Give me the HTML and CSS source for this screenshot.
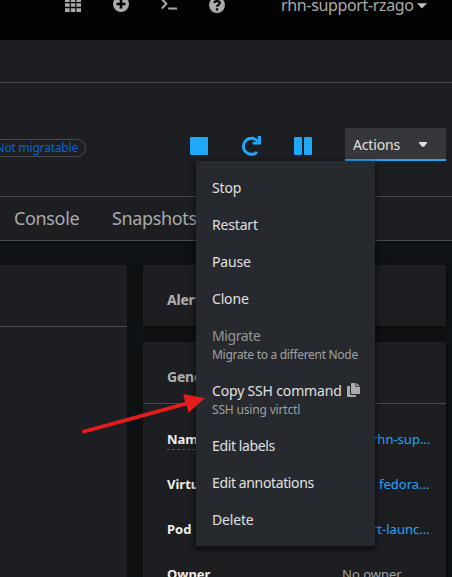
FILE: index.html
```html
<!DOCTYPE html>
<html lang="en">
<head>
<meta charset="utf-8">
<title>Virtual machine</title>
<link rel="stylesheet" href="styles.css">
</head>
<body>
<header class="masthead">
  <svg class="tool" width="16" height="12" viewBox="0 0 16 12"><path d="M0 0h4.6v2H0zM5.8 0h4.4v2H5.8zM11.4 0H16v2h-4.6zM0 3.2h4.6v3.6H0zM5.8 3.2h4.4v3.6H5.8zM11.4 3.2H16v3.6h-4.6zM0 8.2h4.6V12H0zM5.8 8.2h4.4V12H5.8zM11.4 8.2H16V12h-4.6z"/></svg>
  <svg class="tool" width="16" height="18" viewBox="0 0 16 18"><circle cx="8" cy="8" r="8"/><path class="cut" d="M8 3.5v9M3.5 8h9"/></svg>
  <svg class="tool" width="16" height="18" viewBox="0 0 16 18"><path class="prompt" d="M.8 3 5.3 7.8.8 12.6M7.2 12.6H16"/></svg>
  <svg class="tool" width="16" height="18" viewBox="0 0 16 18"><circle cx="8" cy="9" r="8"/><path class="cut question" d="M5.2 6.9C5.8 4.3 11 4.6 10.8 7.2 10.6 9 8 8.8 8 10.8M8 12.2v2.2"/></svg>
  <span class="user">rhn-support-rzago</span>
  <svg class="user-caret" width="10" height="6" viewBox="0 0 10 6"><path d="M0 .2h10L5 5.5z"/></svg>
</header>
<div class="breadcrumb"></div>
<section class="title-row">
  <span class="label">Not migratable</span>
  <div class="controls">
    <svg width="18" height="18" viewBox="0 0 18 18"><rect width="18" height="18" rx="1.2"/></svg>
    <svg width="20" height="20" viewBox="0 0 20 20"><path class="ring" d="M16.5 5.2A8 8 0 1 0 16 16"/><path d="M20 0v8.4h-8.4V5.7h5.1V0z"/></svg>
    <svg width="18" height="18" viewBox="0 0 18 18"><rect width="8" height="18" rx="1.2"/><rect x="10" width="8" height="18" rx="1.2"/></svg>
  </div>
  <div class="dropdown">
    <button class="actions"><span>Actions</span><svg width="8" height="5" viewBox="0 0 8 5"><path d="M0 0h8v1L5 4.7H3L0 1z"/></svg></button>
    <ul class="menu">
      <li>Stop</li>
      <li>Restart</li>
      <li>Pause</li>
      <li>Clone</li>
      <li class="disabled">Migrate<small class="migrate-note">Migrate to a different Node</small></li>
      <li><span class="copy">Copy SSH command</span><svg class="copy-icon" width="13" height="14" viewBox="0 0 13 14"><path d="M3 3H1Q0 3 0 4v9q0 1 1 1h7q1 0 1-1v-1H4q-1 0-1-1zM5 0h3.5v4H13v6q0 1-1 1H5q-1 0-1-1V1q0-1 1-1zM9.3.1 12.9 3.2H9.3z"/></svg><small>SSH using virtctl</small></li>
      <li class="tight">Edit labels</li>
      <li class="tight">Edit annotations</li>
      <li>Delete</li>
    </ul>
  </div>
</section>
<nav class="tabs"><span class="console">Console</span><span>Snapshots</span></nav>
<main class="content">
  <section class="card left"><div class="card-head"></div></section>
  <div class="column">
    <section class="card"><h2>Alert</h2></section>
    <section class="card general">
      <h2 class="card-head">Gene</h2>
      <dl>
        <div><dt class="name">Name</dt><dd class="link namespace">rhn-sup...</dd></div>
        <div><dt>Virtu</dt><dd class="link vm">fedora...</dd></div>
        <div><dt>Pod</dt><dd class="link pod">rt-launc...</dd></div>
        <div><dt>Owner</dt><dd class="owner">No owner</dd></div>
      </dl>
    </section>
  </div>
</main>
<svg class="arrow" width="125" height="42" viewBox="0 0 125 42"><path d="m-.2 36.3 103.4-28.2-2-8 21.6 4.2-16.3 14.5-1.8-7.2L.8 39.7z"/></svg>
</body>
</html>
```
FILE: styles.css
```css
* { box-sizing: border-box; }
body {
  margin: 0;
  height: 577px;
  overflow: hidden;
  position: relative;
  display: flex;
  flex-direction: column;
  background: #0f1214;
  color: #e0e0e0;
  font: 14px/21px "Noto Sans", sans-serif;
}
svg { display: block; flex: none; overflow: visible; }
.masthead {
  display: flex;
  flex: none;
  align-items: flex-start;
  height: 40px;
  padding-left: 65px;
  background: #030303;
  color: #aaabac;
}
.tool { margin-top: -4px; margin-right: 32px; fill: #aaabac; }
.tool:first-child { margin-top: 0; }
.cut { fill: none; stroke: #030303; stroke-width: 2.6; }
.question { stroke-width: 2.3; }
.prompt { fill: none; stroke: #aaabac; stroke-width: 2; }
.user { width: 133px; margin: -5px 3px 0 24px; font-size: 16px; white-space: nowrap; letter-spacing: -.35px; }
.user-caret { margin-top: 3px; fill: #c0c0c0; }
.breadcrumb { flex: none; height: 43px; background: #1d1e22; border-bottom: 1px solid #4a4b4e; }
.title-row {
  display: flex;
  flex: none;
  height: 114px;
  background: #1d1e22;
  border-bottom: 1px solid #4a4b4e;
}
.label {
  width: 106px;
  height: 18px;
  margin: 56px 0 0 -20px;
  padding-right: 7px;
  border: 1px solid #4a4b4e;
  border-radius: 9px;
  color: #0566ce;
  font-size: 12px;
  line-height: 15px;
  text-align: right;
  white-space: nowrap;
  letter-spacing: -.2px;
}
.controls {
  display: flex;
  align-items: center;
  gap: 33px;
  height: 20px;
  margin: 53px 0 0 104px;
  fill: #1fa7f8;
}
.ring { fill: none; stroke: #1fa7f8; stroke-width: 3; }
.dropdown { position: relative; width: 101px; height: 33px; margin: 45px 0 0 33px; }
.actions {
  display: flex;
  align-items: center;
  justify-content: space-between;
  width: 101px;
  height: 33px;
  padding: 2px 19px 0 8px;
  border: 0;
  border-bottom: 2px solid #1fa7f8;
  background: #36373a;
  color: #e0e0e0;
  font: inherit;
  letter-spacing: -.15px;
}
.actions svg { fill: #e0e0e0; margin-top: -1px; }
.menu {
  position: absolute;
  z-index: 2;
  top: 33px;
  right: 71px;
  width: 179px;
  height: 385px;
  margin: 0;
  padding: 8px 0;
  list-style: none;
  letter-spacing: -.17px;
  background: #26292d;
  box-shadow: 0 4px 8px rgba(0,0,0,.48), 0 0 4px rgba(0,0,0,.3);
}
.menu li { padding: 8px 0 8px 16px; white-space: nowrap; }
.menu .tight { letter-spacing: -.37px; }
.menu small { display: block; color: #a0a1a3; font-size: 12px; line-height: 18px; }
.menu .migrate-note { letter-spacing: -.3px; }
.menu .disabled { color: #96979a; letter-spacing: -.4px; }
.copy, .copy-icon { display: inline-block; }
.copy-icon { margin: 0 0 -1px 5px; fill: #aaabac; }
.tabs {
  display: flex;
  flex: none;
  gap: 32px;
  height: 44px;
  padding: 8px 0 0 14px;
  background: #1d1e22;
  border-bottom: 1px solid #4a4b4e;
  color: #a9aaac;
  font-size: 18px;
  line-height: 27px;
  letter-spacing: -.35px;
}
.console { width: 66px; }
.content { display: flex; flex: 1; gap: 16px; min-height: 0; padding-top: 24px; }
.card { background: #1d1e22; box-shadow: 0 2px 5px rgba(0,0,0,.4); }
.left { width: 127px; }
.card-head { height: 62px; border-bottom: 1px solid #4a4b4e; }
.column { width: 303px; display: flex; flex-direction: column; gap: 16px; min-height: 0; }
.column > .card { flex: none; height: 61px; }
.column > .general { flex: 1; height: auto; min-height: 0; }
h2 { margin: 0; padding: 24px; color: #aeafb1; font-size: 14px; line-height: 22px; font-weight: 700; letter-spacing: -.2px; }
dl { margin: 0; padding: 25px 0 0 24px; }
dl div { display: flex; height: 45px; font-size: 13px; line-height: 21px; }
dl div:last-child { height: 21px; }
dt { width: 175px; color: #eee; font-weight: 700; }
.name { border-bottom: 1px dashed #55565a; height: 21px; line-height: 20px; }
dd { margin: 0 0 0 30px; white-space: nowrap; }
.link { color: #1fa7f8; }
.vm { margin-left: 37px; }
.owner { margin-left: 0; color: #a0a1a3; }
.arrow { position: absolute; z-index: 3; left: 82px; top: 394px; fill: #e71c1c; }
```
